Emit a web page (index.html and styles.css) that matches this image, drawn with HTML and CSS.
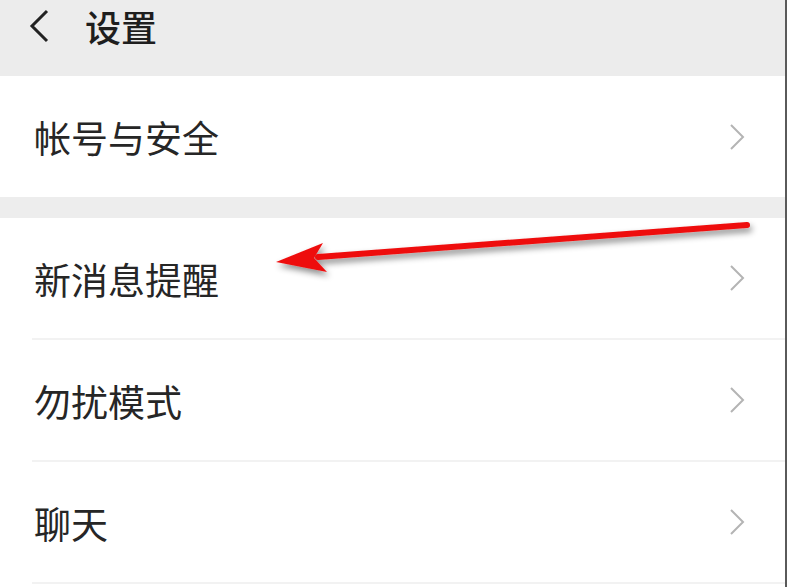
FILE: index.html
```html
<!DOCTYPE html>
<html>
<head>
    <meta charset="utf-8">
    <link rel="stylesheet" href="styles.css">
</head>
<body>
    <div class="screen">
        <div class="header">
            <svg class="back" width="24" height="36" viewBox="0 0 24 36">
                <path d="M20 3 L5 18 L20 33" fill="none" stroke="#222" stroke-width="3"/>
            </svg>
            <span class="header-title">设置</span>
        </div>

        <div class="group">
            <div class="row row-first">
                <span class="label">帐号与安全</span>
                <svg class="chev" width="16" height="28" viewBox="0 0 16 28">
                    <path d="M2 2 L14 14 L2 26" fill="none" stroke="#b4b4b4" stroke-width="2"/>
                </svg>
            </div>
        </div>

        <div class="group group-last">
            <div class="row">
                <span class="label">新消息提醒</span>
                <svg class="chev" width="16" height="28" viewBox="0 0 16 28">
                    <path d="M2 2 L14 14 L2 26" fill="none" stroke="#b4b4b4" stroke-width="2"/>
                </svg>
            </div>
            <div class="row">
                <span class="label">勿扰模式</span>
                <svg class="chev" width="16" height="28" viewBox="0 0 16 28">
                    <path d="M2 2 L14 14 L2 26" fill="none" stroke="#b4b4b4" stroke-width="2"/>
                </svg>
            </div>
            <div class="row">
                <span class="label">聊天</span>
                <svg class="chev" width="16" height="28" viewBox="0 0 16 28">
                    <path d="M2 2 L14 14 L2 26" fill="none" stroke="#b4b4b4" stroke-width="2"/>
                </svg>
            </div>
        </div>

        <!-- annotation arrow drawn over the list -->
        <svg class="arrow" width="787" height="587" viewBox="0 0 787 587">
            <defs>
                <filter id="shadow" x="-10%" y="-50%" width="120%" height="200%">
                    <feDropShadow dx="2" dy="4" stdDeviation="3" flood-color="#000" flood-opacity="0.45"/>
                </filter>
            </defs>
            <g filter="url(#shadow)">
                <path d="M747 225 L318 257" stroke="#ee1111" stroke-width="6" stroke-linecap="round" fill="none"/>
                <path d="M276 262 L323 243 L314 258 L327 272 Z" fill="#ee1111"/>
            </g>
        </svg>
    </div>
</body>
</html>
```

FILE: styles.css
```css
body {
    margin: 0;
    background: #ffffff;
    font-family: "Noto Sans CJK SC", "Noto Sans", sans-serif;
    color: #222;
}

.screen {
    position: relative;
    width: 785px;
    height: 587px;
    overflow: hidden;
    background: #ededed;
    border-right: 2px solid #5a5a5a;
}

.header {
    height: 76px;
    display: flex;
    align-items: center;
    padding-left: 27px;
    box-sizing: border-box;
    padding-bottom: 24px;
    background: #ececec;
}

.back {
    margin-right: 34px;
}

.header-title {
    font-size: 36px;
    line-height: 1;
    font-weight: 500;
    color: #1e1e1e;
}

.group {
    background: #ffffff;
    margin-bottom: 21px;
}

.group-last {
    margin-bottom: 0;
    padding-bottom: 10px;
}

.row {
    height: 122px;
    display: flex;
    align-items: center;
    justify-content: space-between;
    margin-left: 32px;
    padding-right: 40px;
    border-bottom: 2px solid #f2f2f2;
    box-sizing: border-box;
}

.row-first {
    height: 121px;
    border-bottom: none;
}

.label {
    font-size: 37px;
    line-height: 1;
    color: #262626;
    margin-top: 2px;
    padding-left: 2px;
}

.chev {
    display: block;
}

.arrow {
    position: absolute;
    left: 0;
    top: 0;
    pointer-events: none;
}
```
